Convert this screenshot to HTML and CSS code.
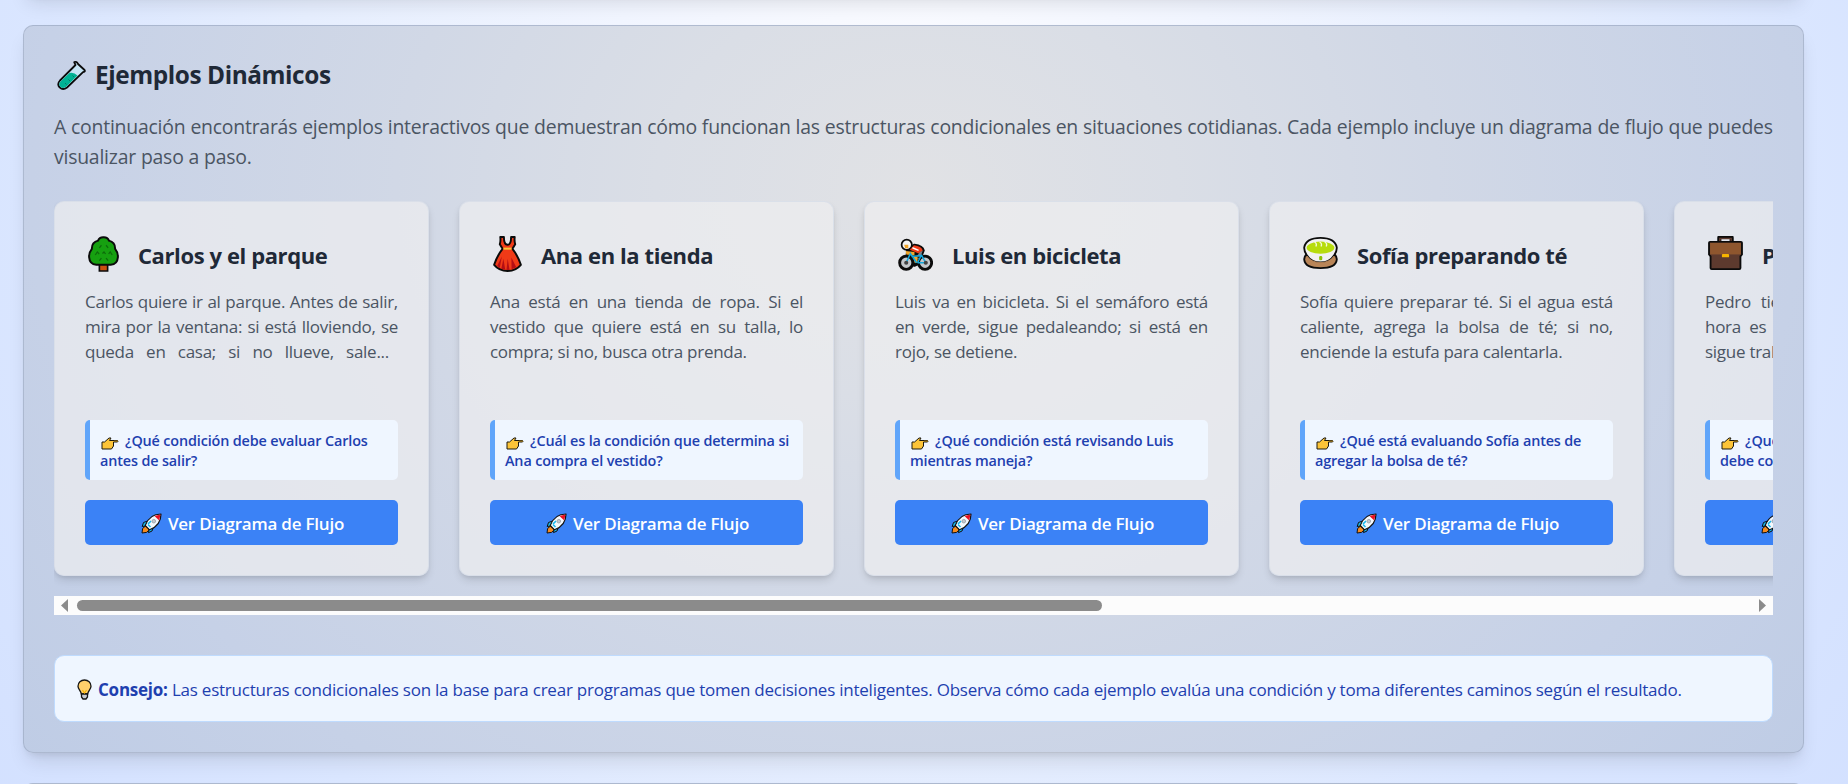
FILE: index.html
```html
<!DOCTYPE html>
<html lang="es">
<head>
<meta charset="utf-8">
<title>Ejemplos Dinámicos</title>
<link rel="stylesheet" href="styles.css">
</head>
<body>
<svg class="sprite" aria-hidden="true">
  <symbol id="hand" viewBox="0 0 18 13">
    <path d="M1 5 H3.5 L8 1 L10 1 L8.5 3.5 H16.5 Q17.5 4.2 16.5 5 H12.5 V9 L10.5 12 H1 Z" fill="#fcc438" stroke="#1c1a10" stroke-width="1" stroke-linejoin="round"/>
    <path d="M13 4.2 H16.8" stroke="#8a6a1c" stroke-width="1.4"/>
  </symbol>
  <symbol id="rocket" viewBox="0 0 21 21">
    <path d="M4.5 13 L1.6 15.5 1 20 5.5 19.4 9 16.5Z" fill="#f58a1f" stroke="#111" stroke-linejoin="round"/>
    <path d="M6.5 8 L2.5 9.5 1.2 13.5 5 13Z M12.5 14 L11 18 7.5 19.6 8 15.5Z" fill="#16b7ee" stroke="#111" stroke-linejoin="round"/>
    <path d="M20 1 C13 1 7 5 4.2 12.5 L8.5 16.8 C16 14 20 8 20 1Z" fill="#f4f8fc" stroke="#111" stroke-width="1.2" stroke-linejoin="round"/>
    <path d="M19.5 1.5 L13.5 2.9 18.2 7.5Z" fill="#e81123"/>
    <path d="M7 11.5 L9.5 14 M10 8 L7 11" stroke="#16b7ee" stroke-width="1.6"/>
    <circle cx="12.8" cy="8.2" r="1.8" fill="#c4c8ce" stroke="#8d949c" stroke-width=".7"/>
  </symbol>
</svg>
<div class="panel panel-prev"></div>
<section class="panel examples">
  <h2 class="heading">
    <svg class="flask" viewBox="0 0 29 29"><path d="M17.2 1.2 Q20 .2 21 3 L27 8.5 Q29.2 10.5 26 11.2 L10 26.5 Q6 29.5 2.6 26.4 Q-.3 23 3 19.5 L18.5 4Z" fill="#c5e4f5" stroke="#0b0b0b" stroke-width="1.8" stroke-linejoin="round"/><path d="M12.5 12 Q17 11 20.5 14.5 L9.4 25.5 Q6 28.3 3.3 25.7 Q1 23 3.8 20.2Z" fill="#00b294"/><path d="M8 22 l1.5 1.5 M11.5 18.5 l1.5 1.5 M15.5 14.5 l1.5 1.5" stroke="#087a66" stroke-width="1"/></svg>
    <span>Ejemplos Dinámicos</span>
  </h2>
  <p class="intro">A continuación encontrarás ejemplos interactivos que demuestran cómo funcionan las estructuras condicionales en situaciones cotidianas. Cada ejemplo incluye un diagrama de flujo que puedes<br>visualizar paso a paso.</p>

  <div class="carousel">
    <article class="card">
      <h3 class="title"><svg class="tree" viewBox="0 0 30 35"><path d="M11 27 h8 v7 h-8z" fill="#ca5010" stroke="#0b0b0b" stroke-width="1.6"/><path d="M15 1.2 Q19 1 20.3 4.5 Q26.5 6 26.3 12.5 Q29.2 16 29 20.5 Q28.5 27.5 22 28 H8 Q1.5 27.5 1 20.5 Q.8 16 3.7 12.5 Q3.5 6 9.7 4.5 Q11 1 15 1.2Z" fill="#16a010" stroke="#0b0b0b" stroke-width="1.9"/><path d="M11 11.5 l2-2.5 M17.5 9 l2 2.5 M7 18.5 l2-3 1.8 2 M20 17.5 l1.5-2 2 3 M14 17 l1.5-1.5 1.5 2 M11 24 l2-2.5 M17.5 21.5 l2 2.5" fill="none" stroke="#0d6b0b" stroke-width="1.2"/></svg><span>Carlos y el parque</span></h3>
      <p class="desc"><span class="full">Carlos quiere ir al parque. Antes de salir,</span><span class="full">mira por la ventana: si está lloviendo, se</span><span class="full clipped">queda en casa; si no llueve, sale...</span></p>
      <p class="question"><svg class="hand"><use href="#hand"/></svg>¿Qué condición debe evaluar Carlos<br>antes de salir?</p>
      <button class="action"><svg class="rocket"><use href="#rocket"/></svg>Ver Diagrama de Flujo</button>
    </article>
    <article class="card">
      <h3 class="title"><svg class="dress" viewBox="0 0 28 35"><path d="M7 1 H10.5 Q10.5 8.5 14 8.5 Q17.5 8.5 17.5 1 H21 Q20.5 5 21.5 8 L18.8 12.5 Q24 19 27 28 Q22 34 14 34 Q6 34 1 28 Q4 19 9.2 12.5 L6.5 8 Q7.5 5 7 1Z" fill="#f03a17" stroke="#0b0b0b" stroke-width="1.9" stroke-linejoin="round"/><path d="M8 31.8 L10 22 11.8 32.8Z M13 33 L14.2 22 16 33Z M18 32.3 L17.8 21 22.5 30.5Z M4 29 L8.5 20 6.5 31Z" fill="#b50e14"/><path d="M10 12.3 H18" stroke="#fcc438" stroke-width="2"/></svg><span>Ana en la tienda</span></h3>
      <p class="desc"><span class="full">Ana está en una tienda de ropa. Si el</span><span class="full">vestido que quiere está en su talla, lo</span><span>compra; si no, busca otra prenda.</span></p>
      <p class="question"><svg class="hand"><use href="#hand"/></svg>¿Cuál es la condición que determina si<br>Ana compra el vestido?</p>
      <button class="action"><svg class="rocket"><use href="#rocket"/></svg>Ver Diagrama de Flujo</button>
    </article>
    <article class="card">
      <h3 class="title"><svg class="bike" viewBox="0 0 34 32"><path d="M9 11 L16 6.5 Q24 7.5 25 12 L23 17 18 19 20 25 16 27 8 22Z" fill="#0b0b0b" stroke="#0b0b0b" stroke-width="2" stroke-linejoin="round"/><circle cx="8" cy="24" r="6.4" fill="#c3c7cb" stroke="#0b0b0b" stroke-width="2.8"/><circle cx="26.3" cy="24" r="6.4" fill="#c3c7cb" stroke="#0b0b0b" stroke-width="2.8"/><circle cx="8.5" cy="6.5" r="5" fill="#f4f4f4" stroke="#0b0b0b" stroke-width="1.7"/><path d="M6 6.5 H10 V10 H7Z M7.5 12.5 L16 13.5 V17 L8 16Z M15 18 h4 v6 h-3z" fill="#f0a52a"/><path d="M11.5 11.5 L15.5 7 Q23 8 24 12 L20 15Z" fill="#f03a17"/><path d="M14 9.5 L20 12" stroke="#fff" stroke-width="1.5"/><path d="M21 14 L24 12 22 18 18 18Z" fill="#7d8288"/><path d="M8 24 L12 15 18 24 M13 18 L23 17 27 24 H19 M23 16 L19 24" fill="none" stroke="#12a7dd" stroke-width="1.5"/><circle cx="8" cy="24" r="2" fill="#444"/><circle cx="27" cy="24" r="2" fill="#444"/></svg><span>Luis en bicicleta</span></h3>
      <p class="desc"><span class="full">Luis va en bicicleta. Si el semáforo está</span><span class="full">en verde, sigue pedaleando; si está en</span><span>rojo, se detiene.</span></p>
      <p class="question"><svg class="hand"><use href="#hand"/></svg>¿Qué condición está revisando Luis<br>mientras maneja?</p>
      <button class="action"><svg class="rocket"><use href="#rocket"/></svg>Ver Diagrama de Flujo</button>
    </article>
    <article class="card">
      <h3 class="title"><svg class="tea" viewBox="0 0 34 34" preserveAspectRatio="none"><path d="M4 18 Q1 20 1.2 24 Q2 33 17 33 Q32 33 32.8 24 Q33 20 30 18Z" fill="#b98558" stroke="#0b0b0b" stroke-width="1.8"/><path d="M1.2 11 Q3 1 17 1 Q31 1 32.8 11 Q33 15 30.5 19 Q26 27 17 27 Q8 27 3.5 19 Q1 15 1.2 11Z" fill="#f1f1f1" stroke="#0b0b0b" stroke-width="1.8"/><path d="M3.8 20.5 Q8 27.2 17 27.2 Q26 27.2 30.2 20.5 Q26 29 17 29 Q8 29 3.8 20.5Z" fill="#b98558" stroke="#b98558"/><ellipse cx="17" cy="11.3" rx="13.5" ry="6.4" fill="#b7dc0c"/><path d="M11 5 q3 2 1.5 5 M16 5 q3 2 1.5 5 M21 5 q3 2 1.5 5" fill="none" stroke="#f4fbd8" stroke-width="1.3"/><rect x="15.7" y="20.3" width="3" height="4.5" rx="1.2" fill="#8cc000"/></svg><span>Sofía preparando té</span></h3>
      <p class="desc"><span class="full">Sofía quiere preparar té. Si el agua está</span><span class="full">caliente, agrega la bolsa de té; si no,</span><span>enciende la estufa para calentarla.</span></p>
      <p class="question"><svg class="hand"><use href="#hand"/></svg>¿Qué está evaluando Sofía antes de<br>agregar la bolsa de té?</p>
      <button class="action"><svg class="rocket"><use href="#rocket"/></svg>Ver Diagrama de Flujo</button>
    </article>
    <article class="card">
      <h3 class="title"><svg class="case" viewBox="0 0 34 35" preserveAspectRatio="none"><path d="M11 6 V2 Q11 1 12 1 H22 Q23 1 23 2 V6" fill="none" stroke="#0b0b0b" stroke-width="4"/><path d="M11.5 6 V2.5 H22.5 V6" fill="none" stroke="#5d3a2e" stroke-width="1.5"/><path d="M2 6 H32 Q33 6 33 7 V19 L31.5 21 V33 Q31.5 34 30.5 34 H3.5 Q2.5 34 2.5 33 V21 L1 19 V7 Q1 6 2 6Z" fill="#5d3a2e" stroke="#0b0b0b" stroke-width="1.8"/><path d="M2 7 H32 V19 H2Z" fill="#8e562e"/><rect x="13.5" y="18.5" width="7" height="3.5" rx="1" fill="#f7b500"/></svg><span>Pedro en el trabajo</span></h3>
      <p class="desc"><span class="full">Pedro tiene que revisar la hora. Si la</span><span class="full">hora es mayor a las cinco, sale; si no,</span><span>sigue trabajando.</span></p>
      <p class="question"><svg class="hand"><use href="#hand"/></svg>¿Qué condición de la hora<br>debe comprobar Pedro?</p>
      <button class="action"><svg class="rocket"><use href="#rocket"/></svg>Ver Diagrama de Flujo</button>
    </article>
  </div>
  <div class="scrollbar">
    <svg class="arrow" viewBox="0 0 8 13"><path d="M8 0 V13 L1 6.5Z" fill="#8b8b8b"/></svg>
    <div class="track"><div class="thumb"></div></div>
    <svg class="arrow" viewBox="0 0 8 13"><path d="M0 0 V13 L7 6.5Z" fill="#8b8b8b"/></svg>
  </div>

  <div class="tip">
    <svg class="bulb" viewBox="0 0 15 21"><path d="M7.5 1 C3.8 1 1 3.7 1 7.2 C1 10.5 4 11.5 4.3 15 H10.7 C11 11.5 14 10.5 14 7.2 C14 3.7 11.2 1 7.5 1Z" fill="#ffcf6b" stroke="#151515" stroke-width="1.3"/><path d="M4.5 15 H10.5 V18 L9 20 H6 L4.5 18Z" fill="#c5c9cf" stroke="#151515" stroke-width="1.3"/><path d="M5.5 11 L7.5 14 9.5 11" fill="none" stroke="#f7b500" stroke-width="1.2"/></svg>
    <p><strong>Consejo:</strong> <span class="advice">Las estructuras condicionales son la base para crear programas que tomen decisiones inteligentes. Observa cómo cada ejemplo evalúa una condición y toma diferentes caminos según el resultado.</span></p>
  </div>
</section>
<div class="panel panel-next"></div>
</body>
</html>
```
FILE: styles.css
```css
* { box-sizing: border-box; }
html { height: 784px; overflow: hidden; }
body {
  margin: 0;
  height: 784px;
  overflow: hidden;
  padding: 0 44px 0 23px;
  display: flex;
  flex-direction: column;
  gap: 30px;
  font-family: "Open Sans", "Noto Sans", sans-serif;
  background: radial-gradient(ellipse 1250px 1150px at 915px 150px, #fdfdff 0%, #f1f5ff 26%, #e6eefe 50%, #dae6ff 71%, #d1dfff 100%);
}
h2, h3, p { margin: 0; }
svg { display: block; flex: none; }
.sprite { position: absolute; width: 0; height: 0; }

.panel {
  flex: none;
  border: 1px solid rgba(120, 135, 160, .32);
  border-radius: 10px;
  box-shadow: 0 12px 19px -4px rgba(0, 0, 0, .11), 0 5px 8px -5px rgba(0, 0, 0, .12);
}
.panel-prev { height: 60px; margin-top: -65px; background: #ccd5e5; }
.panel-next { height: 60px; background: #c6d1e6; }

.examples {
  height: 728px;
  padding: 30px;
  background: radial-gradient(ellipse 1300px 1050px at 892px 165px, #e1e2e5 0%, #dadee6 20%, #d1d8e6 40%, #c6d1e7 68%, #bac9e4 100%);
}

.heading {
  display: flex;
  align-items: center;
  gap: 9px;
  height: 37px;
  padding-left: 3px;
  color: #1f2937;
  font-size: 24.4px;
  font-weight: 700;
  letter-spacing: -.43px;
}
.flask { width: 29px; height: 29px; margin-top: 1px; }
.intro {
  margin-top: 19px;
  color: #4b5563;
  font-size: 19.4px;
  letter-spacing: -.215px;
  word-spacing: .16px;
  line-height: 30px;
  white-space: nowrap;
}

.carousel {
  display: flex;
  gap: 30px;
  height: 395px;
  margin-top: 29px;
  overflow: hidden;
}
.card {
  flex: none;
  display: flex;
  flex-direction: column;
  width: 375px;
  height: 375px;
  padding: 30px;
  border: 1px solid rgba(215, 221, 231, .8);
  border-radius: 10px;
  background: rgba(238, 238, 240, .7);
  box-shadow: 0 5px 8px -1px rgba(0, 0, 0, .12), 0 2px 5px -2px rgba(0, 0, 0, .12);
}
.card > * { flex: none; }
.title {
  display: flex;
  align-items: center;
  height: 45px;
  padding: 0 0 2px 3px;
  gap: 19px;
  color: #1f2937;
  font-size: 22px;
  font-weight: 700;
  letter-spacing: -.4px;
  white-space: nowrap;
}
.title span { padding-top: 3px; }
.tree { width: 31px; height: 36px; }
.dress { width: 29px; height: 36px; }
.bike { width: 35px; height: 33px; margin-top: 2px; }
.tea { width: 35px; height: 32px; margin-top: -1px; }
.case { width: 35px; height: 34px; margin-top: -1px; }

.desc {
  height: 131px;
  margin-top: 12px;
  color: #4b5563;
  font-size: 17px;
  letter-spacing: -.27px;
  line-height: 25px;
}
.desc span { display: block; white-space: nowrap; }
.desc .full { text-align-last: justify; }
.desc .clipped { width: 304px; }

.question {
  height: 60px;
  padding: 11px 10px 9px;
  border-left: 5px solid #60a5fa;
  border-radius: 5px;
  background: #eff6ff;
  color: #1e40af;
  font-size: 14.4px;
  font-weight: 600;
  letter-spacing: -.14px;
  line-height: 20px;
  white-space: nowrap;
}
.hand { display: inline-block; width: 18px; height: 13px; margin: 0 6px 0 1px; vertical-align: -4px; }
.action {
  display: flex;
  align-items: center;
  justify-content: center;
  gap: 6px;
  height: 45px;
  margin-top: 20px;
  padding: 2px 0 0 2px;
  border: 0;
  border-radius: 5px;
  background: #3b82f6;
  color: #fff;
  font: 600 17px "Open Sans", sans-serif;
  letter-spacing: -.22px;
  white-space: nowrap;
}
.rocket { width: 21px; height: 21px; }

.scrollbar {
  display: flex;
  align-items: center;
  height: 19px;
  padding: 0 6px;
  background: #fcfcfc;
}
.arrow { width: 8px; height: 13px; }
.track { flex: 1; padding: 0 9px; }
.thumb { width: 1025px; height: 11px; border-radius: 6px; background: #8b8b8b; }

.tip {
  display: flex;
  align-items: center;
  gap: 6px;
  height: 67px;
  margin-top: 40px;
  padding: 2px 22px 0;
  border: 1px solid #bfdbfe;
  border-radius: 10px;
  background: #eff6ff;
  color: #1e40af;
  font-size: 17px;
  letter-spacing: -.232px;
  white-space: nowrap;
}
.bulb { width: 15px; height: 21px; }
```
